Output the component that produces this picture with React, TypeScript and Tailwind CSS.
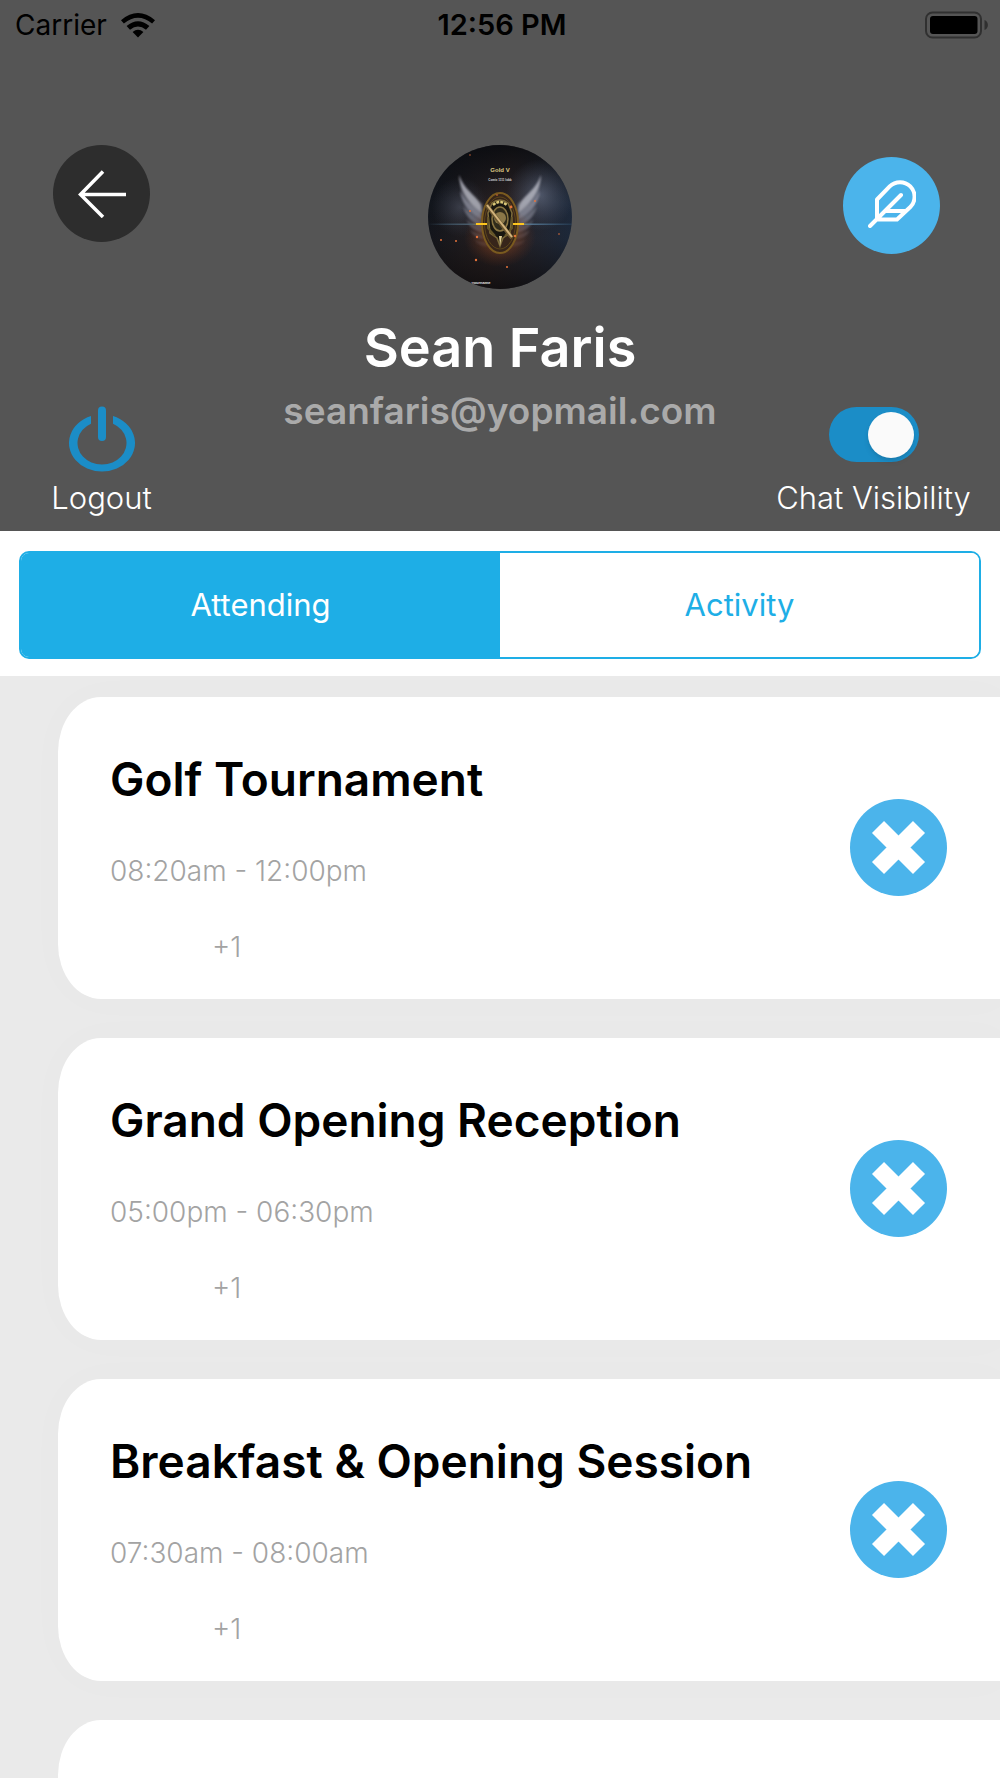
import { useState } from "react";

type Session = { title: string; time: string; extra: string };

const sessions: Session[] = [
  { title: "Golf Tournament", time: "08:20am - 12:00pm", extra: "+1" },
  { title: "Grand Opening Reception", time: "05:00pm - 06:30pm", extra: "+1" },
  { title: "Breakfast & Opening Session", time: "07:30am - 08:00am", extra: "+1" },
];

function WifiIcon() {
  return (
    <svg viewBox="0 0 34 25" className="h-[25px] w-[34px]" aria-hidden="true">
      <path d="M0 7.2Q17 -7 34 7.2L31.1 10.6Q17 -1 2.9 10.6Z" />
      <path d="M5.6 13Q17 3.4 28.4 13L25 16.8Q17 10.4 9 16.8Z" />
      <path d="M11.6 19Q17 14.4 22.4 19L17 24.6Z" />
    </svg>
  );
}

function BatteryIcon() {
  return (
    <svg viewBox="0 0 64 28" className="h-7 w-16" aria-hidden="true">
      <rect x="1" y="1.5" width="55" height="25" rx="6.5" fill="none" stroke="#303030" strokeWidth="2" />
      <rect x="5" y="5" width="47.5" height="18" rx="3" />
      <path d="M59.5 9C64 10.5 64 17.5 59.5 19Z" fill="#303030" />
    </svg>
  );
}

function StatusBar() {
  return (
    <div className="grid h-[50px] grid-cols-3 items-center pl-[15px] pr-[11px] text-[28px] leading-8 text-black">
      <div className="flex items-center gap-[14px]">
        <span>Carrier</span>
        <WifiIcon />
      </div>
      <span className="text-center text-[29px] font-semibold">12:56 PM</span>
      <div className="flex justify-end">
        <BatteryIcon />
      </div>
    </div>
  );
}

function Wing() {
  return (
    <g>
      <path d="M31 30C36 43 44 50 55 59L58 91C46 80 33 62 31 30Z" fill="#8f92a0" opacity=".4" />
      <path d="M31 30C36 45 47 49 53 60L54 68C44 61 32 49 31 30Z" fill="#bcbdc8" />
      <path d="M32 46C38 58 47 61 53 68L54 75C44 70 34 61 32 46Z" fill="#8e909f" />
      <path d="M35 61C41 69 47 71 53 76L54 82C45 79 37 71 35 61Z" fill="#767886" />
      <path d="M38 74C43 79 49 80 54 83L55 88C48 87 41 82 38 74Z" fill="#60616d" />
      <path d="M42 85C47 88 51 88 55 90L56 94C50 94 45 91 42 85Z" fill="#4c4c55" />
      <path d="M46 94C50 97 54 96 58 97L60 101C54 102 49 99 46 94Z" fill="#3d3b41" />
    </g>
  );
}

function Avatar() {
  return (
    <svg viewBox="0 0 144 144" className="size-36" role="img" aria-label="Sean Faris">
      <defs>
        <clipPath id="face">
          <circle cx="72" cy="72" r="72" />
        </clipPath>
        <filter id="soft">
          <feGaussianBlur stdDeviation="0.8" />
        </filter>
        <linearGradient id="sky" x1="0" x2="1" y1="0.4" y2="0.6">
          <stop offset="0" stopColor="#11151c" />
          <stop offset=".5" stopColor="#2a2223" />
          <stop offset="1" stopColor="#1d2a3d" />
        </linearGradient>
        <linearGradient id="shade" x1="0" x2="0" y1="0" y2="1">
          <stop offset="0" stopColor="#080a0e" stopOpacity=".85" />
          <stop offset=".4" stopColor="#080a0e" stopOpacity="0" />
          <stop offset=".65" stopColor="#120d0c" stopOpacity=".1" />
          <stop offset="1" stopColor="#0d0b0c" stopOpacity=".8" />
        </linearGradient>
        <radialGradient id="mist">
          <stop offset="0" stopColor="#7e8ba6" stopOpacity=".5" />
          <stop offset="1" stopColor="#5a6680" stopOpacity="0" />
        </radialGradient>
        <radialGradient id="ember">
          <stop offset="0" stopColor="#a3572a" stopOpacity=".8" />
          <stop offset="1" stopColor="#6b2e18" stopOpacity="0" />
        </radialGradient>
        <linearGradient id="flare">
          <stop offset="0" stopColor="#4f7c9b" stopOpacity="0" />
          <stop offset=".3" stopColor="#4c5d6b" />
          <stop offset=".44" stopColor="#ffc61f" />
          <stop offset=".56" stopColor="#ffc61f" />
          <stop offset=".7" stopColor="#55748e" />
          <stop offset="1" stopColor="#3f6f95" stopOpacity=".2" />
        </linearGradient>
      </defs>
      <g clipPath="url(#face)">
        <rect width="144" height="144" fill="url(#sky)" />
        <rect width="144" height="144" fill="url(#shade)" />
        <ellipse cx="112" cy="50" rx="34" ry="36" fill="url(#mist)" />
        <ellipse cx="32" cy="62" rx="28" ry="30" fill="url(#mist)" opacity=".6" />
        <g filter="url(#soft)" opacity=".8">
          <Wing />
          <g transform="translate(144 0) scale(-1 1)">
            <Wing />
          </g>
        </g>
        <ellipse cx="72" cy="92" rx="36" ry="30" fill="url(#ember)" />
        <rect y="78.5" width="144" height="1.5" fill="url(#flare)" />
        <ellipse cx="72" cy="78" rx="18" ry="30" fill="#37251a" stroke="#7a5a1f" strokeWidth="2" />
        <ellipse cx="72" cy="78" rx="15.5" ry="26" fill="none" stroke="#5d461b" strokeWidth="1" />
        <rect x="48" y="78" width="12" height="2" fill="#ffc61f" />
        <rect x="84" y="78" width="12" height="2" fill="#ffc61f" />
        <path d="M64 58Q72 52 80 58L84 68L82 88L75 93L72 101L69 93L62 88L60 68Z" fill="#191710" stroke="#7d6b3a" strokeWidth="1.5" />
        <path d="M65 60Q72 54 79 60" fill="none" stroke="#dbc878" strokeWidth="2.5" strokeDasharray="3 1" />
        <ellipse cx="72" cy="74" rx="8" ry="12" fill="#302b1b" stroke="#8a7643" strokeWidth="1.5" />
        <circle cx="72" cy="73" r="6" fill="#8a7748" />
        <path d="M60 72V83L67 91M84 72V83L77 91" fill="none" stroke="#655529" strokeWidth="2" />
        <path d="M71 91L72 101L74 91" fill="#e3cf93" />
        <path d="M58.5 60L84 93" stroke="#6d5831" strokeWidth="4" />
        <path d="M59 60L84 92" stroke="#d2b37c" strokeWidth="2" />
        <g fill="#e6733b">
          <circle cx="42" cy="66" r="1" />
          <circle cx="49" cy="92" r="1.2" />
          <circle cx="28" cy="96" r="1" />
          <circle cx="13" cy="95" r="1" />
          <circle cx="48" cy="115" r="1.2" />
          <circle cx="79" cy="122" r="1" />
          <circle cx="83" cy="62" r="1.4" />
          <circle cx="107" cy="56" r="1" />
          <circle cx="69" cy="50" r=".8" />
          <circle cx="87" cy="91" r="1.2" />
          <circle cx="131" cy="89" r=".8" />
          <circle cx="42" cy="10" r=".7" />
        </g>
        <text x="72" y="27" textAnchor="middle" fontFamily="Liberation Sans" fontWeight="700" fontSize="6" fill="#dcc984">Gold V</text>
        <text x="72" y="36" textAnchor="middle" fontFamily="Liberation Sans" fontWeight="700" fontSize="3" fill="#d9d9dc">Comix 1111 lobb</text>
        <text x="53" y="139" textAnchor="middle" fontFamily="Liberation Sans" fontWeight="700" fontSize="4" fill="#e4e4e4">yourname</text>
      </g>
    </svg>
  );
}

function PowerIcon() {
  return (
    <svg viewBox="0 0 66 66" className="size-[66px]" fill="#1b8dc7" aria-hidden="true">
      <path d="M22 10.1A33 28.5 0 1 0 44 10.1V17.8A24.5 21.5 0 1 1 22 17.8Z" />
      <rect x="29" y=".5" width="8" height="34.5" rx="4" />
    </svg>
  );
}

function Header() {
  const [visible, setVisible] = useState(true);
  return (
    <header className="shrink-0 bg-[#555555]">
      <StatusBar />
      <div className="grid h-[481px] grid-cols-[1fr_auto_1fr]">
        <div className="flex w-[203px] flex-col items-center justify-between pb-[15px] pt-[95px]">
          <button aria-label="Back" className="flex size-[97px] items-center justify-center rounded-full bg-[#2d2d2d]">
            <svg viewBox="0 0 48 48" className="size-12" fill="none" stroke="#fff" strokeWidth="3.5" aria-hidden="true">
              <path d="M25 1.5L2.5 24.5L25 47M2.5 24.5H48" />
            </svg>
          </button>
          <button className="flex flex-col items-center gap-2 text-[31px] leading-9 text-white">
            <PowerIcon />
            <span className="font-light">Logout</span>
          </button>
        </div>
        <div className="flex flex-col items-center pt-[95px]">
          <Avatar />
          <h1 className="mt-[25px] text-[54px] font-semibold leading-[68px] text-white">Sean Faris</h1>
          <p className="mt-[3px] text-[37px] font-semibold leading-[52px] text-[#aaaaaa]">seanfaris@yopmail.com</p>
        </div>
        <div className="flex w-[217px] flex-col items-center justify-between justify-self-end pb-[15px] pt-[107px]">
          <button aria-label="Edit profile" className="flex size-[97px] items-center justify-center rounded-full bg-[#4bb4eb] pb-1">
            <svg viewBox="0 0 48 48" className="size-12" fill="none" stroke="#fff" strokeWidth="4" strokeLinecap="round" strokeLinejoin="round" aria-hidden="true">
              <path d="M2 46L33 15M9 39.5V19.5L21.7 6.4A14.5 14.5 0 0 1 42.3 27L29 39.5H9M18 31H37" />
            </svg>
          </button>
          <label className="mr-9 flex cursor-pointer flex-col items-center gap-[18px] whitespace-nowrap text-[31px] font-light leading-9 text-white">
            <input
              type="checkbox"
              role="switch"
              checked={visible}
              onChange={() => setVisible(!visible)}
              className="peer sr-only"
            />
            <span className="flex h-[55px] w-[90px] items-center rounded-full bg-[#8b8b8b] p-[5px] peer-checked:justify-end peer-checked:bg-[#1b8dc7]">
              <span className="size-[46px] rounded-full bg-[#fafafa] shadow-md" />
            </span>
            <span>Chat Visibility</span>
          </label>
        </div>
      </div>
    </header>
  );
}

function Tabs() {
  const [active, setActive] = useState("Attending");
  return (
    <div className="shrink-0 bg-white px-[19px] pb-[17px] pt-5">
      <div role="tablist" className="flex h-[108px] overflow-hidden rounded-[10px] border-2 border-[#1eaee6]">
        {["Attending", "Activity"].map((name) => (
          <button
            key={name}
            role="tab"
            aria-selected={active === name}
            onClick={() => setActive(name)}
            className={
              active === name
                ? "flex-1 bg-[#1eaee6] text-[31px] text-white"
                : "flex-1 bg-white text-[31px] text-[#1eaee6]"
            }
          >
            {name}
          </button>
        ))}
      </div>
    </div>
  );
}

function SessionCard({ title, time, extra }: Session) {
  return (
    <li className="flex shrink-0 items-center justify-between rounded-[43px_0_0_43px/55px_0_0_55px] bg-white pb-[34px] pl-[52px] pr-[53px] pt-[54px] shadow-[0_0_40px_8px_rgba(0,0,0,0.01)]">
      <div>
        <h2 className="text-[46px] font-semibold leading-[56px] text-black">{title}</h2>
        <p className="mt-[46px] text-[28px] font-light leading-9 text-[#a3a3a3]">{time}</p>
        <p className="mt-10 pl-[102px] text-[28px] font-light leading-9 text-[#a3a3a3]">{extra}</p>
      </div>
      <button aria-label={`Remove ${title}`} className="-mt-[22px] size-[97px] shrink-0 rounded-full bg-[#4bb4eb]">
        <svg viewBox="0 0 97 97" className="size-full" fill="none" stroke="#fff" strokeWidth="17" aria-hidden="true">
          <path d="M28 28L69 69M69 28L28 69" />
        </svg>
      </button>
    </li>
  );
}

export default function App() {
  return (
    <main className="flex h-screen flex-col overflow-hidden bg-[#eaeaea] font-['Inter','Liberation_Sans',sans-serif]">
      <Header />
      <Tabs />
      <ul className="flex min-h-0 flex-1 flex-col gap-[39px] overflow-y-auto pl-[58px] pt-[21px] [scrollbar-width:none]">
        {sessions.map((session) => (
          <SessionCard key={session.title} {...session} />
        ))}
        <li aria-hidden="true" className="h-72 shrink-0 rounded-[43px_0_0_43px/55px_0_0_55px] bg-white" />
      </ul>
    </main>
  );
}
